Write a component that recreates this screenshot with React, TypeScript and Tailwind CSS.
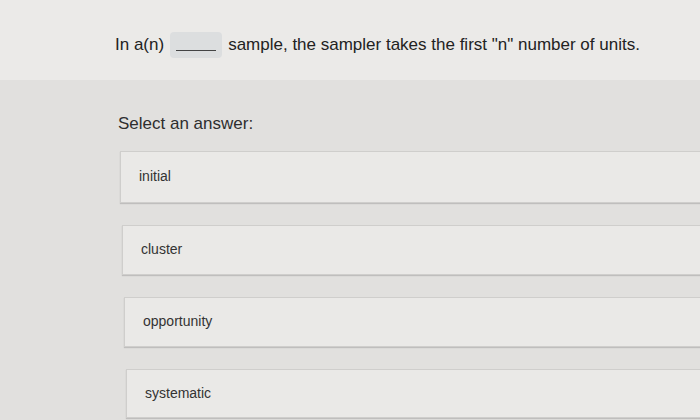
export default function App() {
  const options = [
    { label: 'initial', ml: 'ml-[120px]', h: 'h-[52px]' },
    { label: 'cluster', ml: 'ml-[122px]', h: 'h-[50px]' },
    { label: 'opportunity', ml: 'ml-[124px]', h: 'h-[50px]' },
    { label: 'systematic', ml: 'ml-[126px]', h: 'h-[49px]' },
  ];

  return (
    <div className="w-[700px] h-[420px] overflow-hidden bg-[#e1e0de] font-['Liberation_Sans',Arial,sans-serif] text-[#222]">
      {/* Question */}
      <div className="h-[80px] bg-[#ebeae8] flex items-center pl-[115px] pt-[10px] text-[17px]">
        <span>In a(n)</span>
        <span className="ml-[6px] mr-[6px] w-[52px] h-[26px] rounded-[4px] bg-[#dcdedf] flex items-end justify-center pb-[7px]">
          <span className="block w-[40px] h-[1px] bg-[#444]" />
        </span>
        <span>sample, the sampler takes the first "n" number of units.</span>
      </div>

      {/* Answers */}
      <div className="pt-[31px]">
        <p className="ml-[118px] text-[17px] text-[#2e2e2e]">Select an answer:</p>
        <div className="mt-[14px] flex flex-col gap-[22px]">
          {options.map(o => (
            <div
              key={o.label}
              className={`${o.ml} ${o.h} bg-[#eae9e7] border border-[#cfcecc] border-r-0 shadow-[0_1px_1px_rgba(0,0,0,0.15)] flex items-center pl-[18px] text-[14px] text-[#333]`}
            >
              {o.label}
            </div>
          ))}
        </div>
      </div>
    </div>
  );
}
